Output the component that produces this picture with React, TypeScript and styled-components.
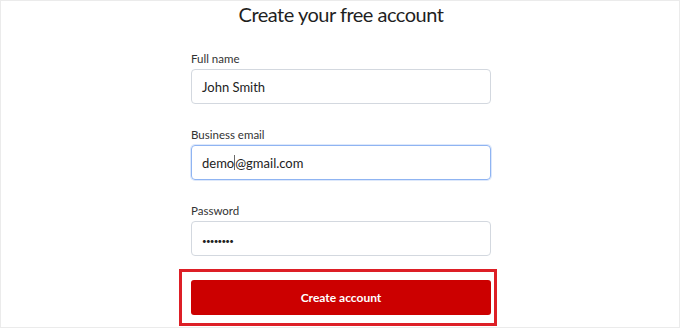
import React from 'react'
import styled, { createGlobalStyle } from 'styled-components'

const GlobalStyle = createGlobalStyle`
    html, body {
        margin: 0;
        padding: 0;
        background: #ffffff;
    }
    body {
        font-family: Lato, "Noto Sans", Arial, sans-serif;
        -webkit-font-smoothing: antialiased;
    }
    * {
        box-sizing: border-box;
    }
`

interface FieldProps {
    label: string;
    value: string;
    focused?: boolean;
    caretAt?: number;
    secret?: boolean;
}

const Field = ({ label, value, focused, caretAt, secret }: FieldProps) => {
    const hasCaret = caretAt !== undefined
    return (
        <Group>
            <Label>{label}</Label>
            <InputBox $focused={focused}>
                {secret ? (
                    <Dots>{'•'.repeat(value.length)}</Dots>
                ) : hasCaret ? (
                    <>
                        {value.slice(0, caretAt)}
                        <Caret />
                        {value.slice(caretAt)}
                    </>
                ) : (
                    value
                )}
            </InputBox>
        </Group>
    )
}

const App = () => {
    return (
        <>
            <GlobalStyle />
            <Frame>
                <Title>Create your free account</Title>
                <Form>
                    <Field label="Full name" value="John Smith" />
                    <Field label="Business email" value="demo@gmail.com" focused caretAt={4} />
                    <Field label="Password" value="password" secret />
                    <Highlight>
                        <SubmitButton type="button">Create account</SubmitButton>
                    </Highlight>
                </Form>
            </Frame>
        </>
    )
}

const Frame = styled.div`
    width: 680px;
    height: 328px;
    border: 1px solid #ebebeb;
    padding-left: 2px;
    display: flex;
    flex-direction: column;
    align-items: center;
    overflow: hidden;
`

const Title = styled.h1`
    margin: 0;
    font-size: 20px;
    line-height: 26px;
    font-weight: 400;
    color: #1f1f1f;
    letter-spacing: -0.5px;
`

const Form = styled.div`
    width: 300px;
    margin-top: 24px;
    display: flex;
    flex-direction: column;
`

const Group = styled.div`
    display: flex;
    flex-direction: column;
    gap: 2px;
    margin-bottom: 23px;

    &:nth-of-type(3) {
        margin-bottom: 13px;
    }
`

const Label = styled.label`
    font-size: 11.5px;
    line-height: 16px;
    color: #333333;
`

const InputBox = styled.div<{ $focused?: boolean }>`
    height: 35px;
    display: flex;
    align-items: center;
    padding: 0 10px;
    border: 1px solid ${({ $focused }) => ($focused ? '#8fb4f2' : '#d3d8df')};
    border-radius: 4px;
    box-shadow: ${({ $focused }) => ($focused ? '0 0 0 1px rgba(143,180,242,0.3)' : 'none')};
    font-size: 13px;
    color: #222222;
    white-space: pre;
`

const Caret = styled.span`
    display: inline-block;
    width: 1px;
    height: 15px;
    background: #6a6a6a;
`

const Dots = styled.span`
    font-size: 8px;
    letter-spacing: -0.75px;
    padding-top: 4px;
    color: #222222;
`

const Highlight = styled.div`
    margin: 0 -6px 0 -12px;
    padding: 8px 3px 8px 9px;
    border: 3px solid #dd1f26;
`

const SubmitButton = styled.button`
    width: 100%;
    height: 35px;
    border: none;
    border-radius: 3px;
    background: #cc0000;
    color: #ffffff;
    font-family: inherit;
    font-size: 12px;
    font-weight: 700;
    cursor: pointer;
`

export default App
